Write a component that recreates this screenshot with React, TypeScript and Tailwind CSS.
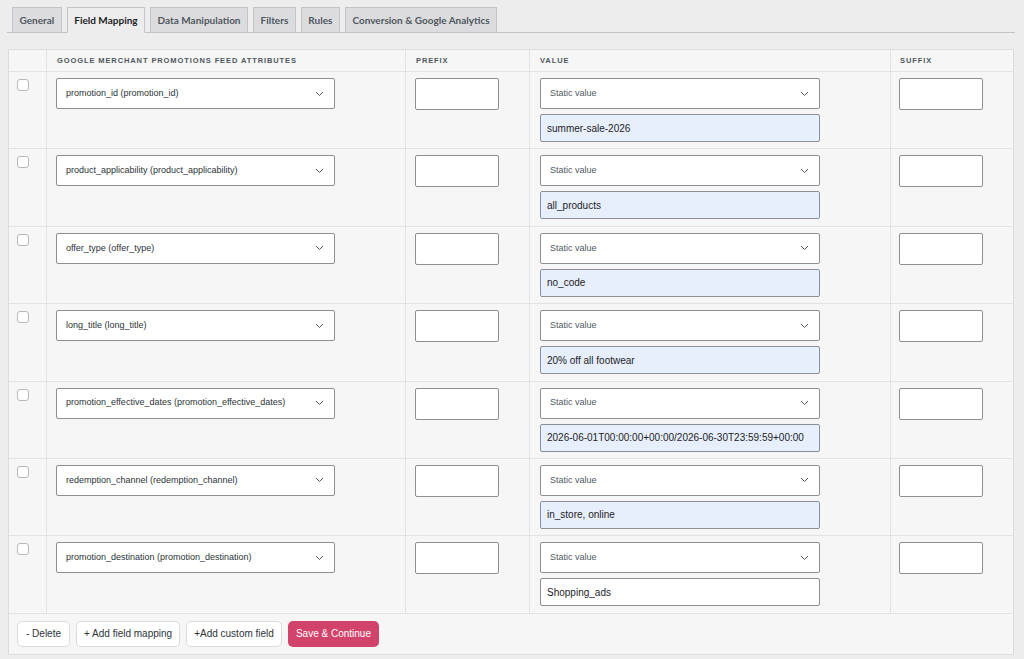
import React from "react";

type Mapping = {
	attribute: string;
	value: string;
};

const tabs = [
	"General",
	"Field Mapping",
	"Data Manipulation",
	"Filters",
	"Rules",
	"Conversion & Google Analytics",
];

const mappings: Mapping[] = [
	{ attribute: "promotion_id (promotion_id)", value: "summer-sale-2026" },
	{ attribute: "product_applicability (product_applicability)", value: "all_products" },
	{ attribute: "offer_type (offer_type)", value: "no_code" },
	{ attribute: "long_title (long_title)", value: "20% off all footwear" },
	{
		attribute: "promotion_effective_dates (promotion_effective_dates)",
		value: "2026-06-01T00:00:00+00:00/2026-06-30T23:59:59+00:00",
	},
	{ attribute: "redemption_channel (redemption_channel)", value: "in_store, online" },
	{ attribute: "promotion_destination (promotion_destination)", value: "Shopping_ads" },
];

const Chevron = () => (
	<svg width="9" height="6" viewBox="0 0 9 6" fill="none" className="shrink-0">
		<path d="M1 1l3.5 3.5L8 1" stroke="#50575e" strokeWidth="1" />
	</svg>
);

const SelectBox = ({ label, muted, width }: { label: string; muted?: boolean; width: string }) => (
	<div
		className={`flex h-[31px] ${width} items-center justify-between rounded-[2px] border border-[#8c8f94] bg-white pl-[9px] pr-[10px]`}
	>
		<span className={`text-[9px] ${muted ? "text-[#50575e]" : "text-[#2c3338]"}`}>{label}</span>
		<Chevron />
	</div>
);

const gridCols = "grid grid-cols-[37px_359px_124px_361px_123px]";

const App = () => {
	return (
		<div
			className="min-h-[659px] bg-[#ededed] pl-[7px] pr-[9px] pt-[7px]"
			style={{ fontFamily: '"Liberation Sans", Arial, sans-serif' }}
		>
			{/* Settings tabs */}
			<div className="flex gap-[5px] border-b border-[#c3c4c7] pl-[5px]" style={{ fontFamily: "Lato, sans-serif" }}>
				{tabs.map((tab) => {
					const active = tab === "Field Mapping";
					return (
						<div
							key={tab}
							className={`-mb-px flex h-[26px] items-center border border-[#c3c4c7] px-[6.5px] text-[10px] font-bold ${
								active
									? "border-b-[#ededed] bg-[#ededed] text-[#1d2327]"
									: "bg-[#dcdcde] text-[#50575e]"
							}`}
						>
							{tab}
						</div>
					);
				})}
			</div>

			{/* Mapping table */}
			<div className="mx-px mt-[16px] border border-[#dcdcde] bg-[#f6f6f6]">
				<div className={`${gridCols} h-[21px] text-[7.5px] font-bold uppercase tracking-[0.9px] text-[#50575e]`}>
					<div />
					<div className="flex items-center border-l border-[#e2e2e2] pl-[10px]">
						Google Merchant Promotions Feed Attributes
					</div>
					<div className="flex items-center border-l border-[#e2e2e2] pl-[10px]">Prefix</div>
					<div className="flex items-center border-l border-[#e2e2e2] pl-[10px]">Value</div>
					<div className="flex items-center border-l border-[#e2e2e2] pl-[9px]">Suffix</div>
				</div>

				{mappings.map((row, i) => {
					const last = i === mappings.length - 1;
					return (
						<div key={row.attribute} className={`${gridCols} h-[77.4px] border-t border-[#e2e2e2]`}>
							<div className="pl-[8px] pt-[7px]">
								<div className="h-[12px] w-[12px] rounded-[3px] border border-[#b4b9be] bg-white" />
							</div>
							<div className="border-l border-[#e2e2e2] pl-[9px] pt-[6px]">
								<SelectBox label={row.attribute} width="w-[279px]" />
							</div>
							<div className="border-l border-[#e2e2e2] pl-[9px] pt-[6px]">
								<div className="h-[32px] w-[84px] rounded-[2px] border border-[#8c8f94] bg-white" />
							</div>
							<div className="flex flex-col gap-[5px] border-l border-[#e2e2e2] pl-[10px] pt-[6px]">
								<SelectBox label="Static value" muted width="w-[280px]" />
								<div
									className={`flex h-[28px] w-[280px] items-center rounded-[2px] border border-[#8c8f94] pl-[6px] text-[10px] text-[#1d2327] ${
										last ? "bg-white" : "bg-[#e8effc]"
									}`}
								>
									{row.value}
								</div>
							</div>
							<div className="border-l border-[#e2e2e2] pl-[8px] pt-[6px]">
								<div className="h-[32px] w-[84px] rounded-[2px] border border-[#8c8f94] bg-white" />
							</div>
						</div>
					);
				})}

				{/* Footer actions */}
				<div className="flex h-[41px] items-center gap-[6px] border-t border-[#e2e2e2] pl-[8px] text-[10px]">
					<button className="h-[26px] rounded-[5px] border border-[#dcdcde] bg-white px-[8px] text-[#2c3338]">
						- Delete
					</button>
					<button className="h-[26px] rounded-[5px] border border-[#dcdcde] bg-white px-[7px] text-[#2c3338]">
						+ Add field mapping
					</button>
					<button className="h-[26px] rounded-[5px] border border-[#dcdcde] bg-white px-[7px] text-[#2c3338]">
						+Add custom field
					</button>
					<button className="h-[26px] rounded-[5px] bg-[#d2436b] px-[8px] text-white">Save &amp; Continue</button>
				</div>
			</div>
		</div>
	);
};

export default App;
